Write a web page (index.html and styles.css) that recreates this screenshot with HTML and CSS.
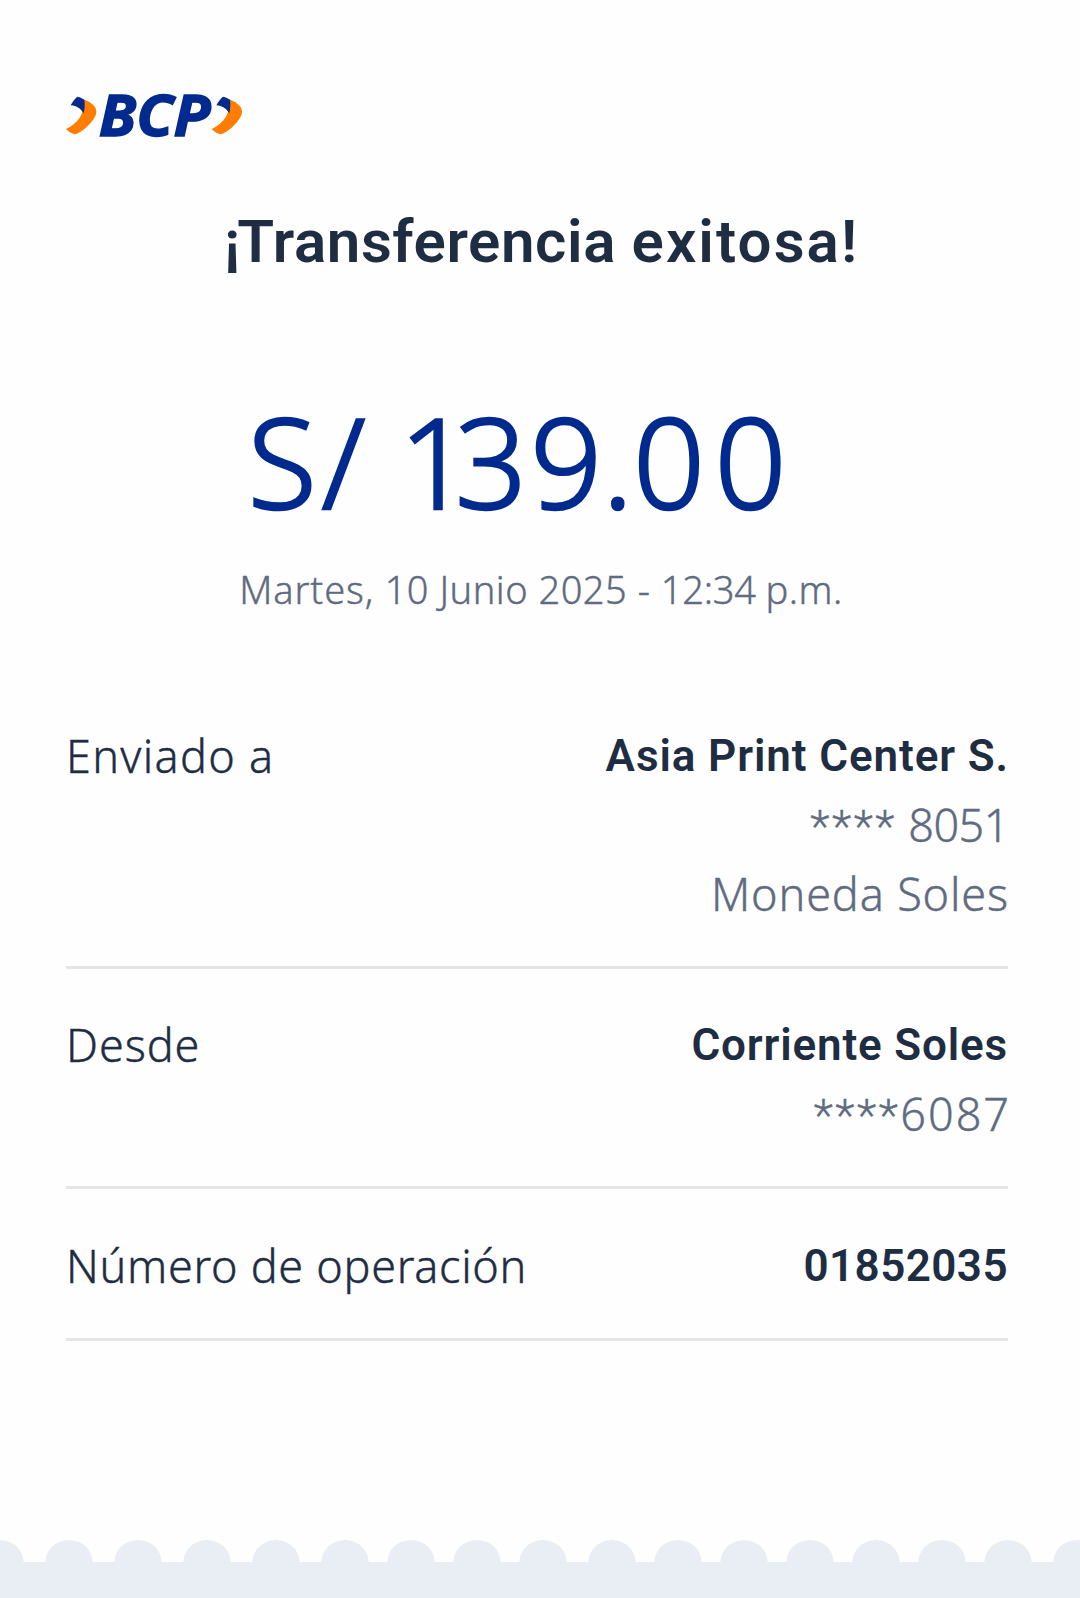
FILE: index.html
```html
<!DOCTYPE html>
<html lang="es">
<head>
<meta charset="utf-8">
<title>¡Transferencia exitosa!</title>
<link rel="stylesheet" href="styles.css">
</head>
<body>
<main class="receipt">
  <svg class="logo" viewBox="0 -30 630 270" role="img" aria-label="BCP">
    <defs>
      <g id="chevron">
        <path fill="#ff7d00" d="M98 57L106 60C126 69 138 80 139 93C140 108 126 127 108 143C96 153 85 161 74 163C66 161 55 155 48 147C68 138 88 122 97 97Z"/>
        <path fill="#002a8d" d="M62 76C68 65 74 56 82 50C90 51 99 55 103 60C105 72 104 86 101 100C93 87 80 76 62 76Z"/>
      </g>
    </defs>
    <use href="#chevron"/>
    <text class="logo-text" x="146" y="169" textLength="336" lengthAdjust="spacingAndGlyphs">BCP</text>
    <use href="#chevron" x="437"/>
  </svg>

  <h1 class="title"><span class="mark">¡</span>Transferencia <span class="wide">exitosa!</span></h1>
  <p class="amount"><span class="currency">S<span class="slash">/</span></span> <span class="figure"><span class="one">1</span><span class="three">3</span>9.<span class="zero">0</span>0</span></p>
  <p class="date"><span class="day">Martes,</span> 10 Junio 2025 - <span class="time">12:34 </span>p.m.</p>

  <dl class="details">
    <div class="row">
      <dt class="label label-sent">Enviado a</dt>
      <dd class="values">
        <span class="strong name">Asia Print Center S.</span>
        <span class="muted account"><span class="mask">****</span> 8051</span>
        <span class="muted currency-name">Moneda Soles</span>
      </dd>
    </div>
    <div class="row">
      <dt class="label label-from">Desde</dt>
      <dd class="values">
        <span class="strong">Corriente Soles</span>
        <span class="muted source"><span class="mask">****</span>6087</span>
      </dd>
    </div>
    <div class="row">
      <dt class="label">Número de operación</dt>
      <dd class="values"><span class="strong number">01852035</span></dd>
    </div>
  </dl>
</main>
<svg class="edge" viewBox="0 0 1080 58" aria-hidden="true">
  <defs><ellipse id="bump" cy="22.5" rx="23.7" ry="22.5"/></defs>
  <rect y="22" width="1080" height="36"/>
  <use href="#bump" x="0"/><use href="#bump" x="69"/><use href="#bump" x="138"/><use href="#bump" x="207"/>
  <use href="#bump" x="276"/><use href="#bump" x="345"/><use href="#bump" x="411"/><use href="#bump" x="477"/>
  <use href="#bump" x="543"/><use href="#bump" x="612"/><use href="#bump" x="678"/><use href="#bump" x="744"/>
  <use href="#bump" x="810"/><use href="#bump" x="876"/><use href="#bump" x="942"/><use href="#bump" x="1008"/>
  <use href="#bump" x="1077"/>
</svg>
</body>
</html>
```
FILE: styles.css
```css
* { box-sizing: border-box; }

body {
  margin: 0;
  height: 1598px;
  display: flex;
  flex-direction: column;
  justify-content: space-between;
  overflow: hidden;
  background: #fefefe;
  color: #1f2d43;
  font-family: "Noto Sans", "Open Sans", sans-serif;
  font-weight: 300;
}

.receipt { padding-top: 70px; }

.logo {
  display: block;
  width: 210px;
  height: 90px;
  margin-left: 50px;
}

.logo-text {
  fill: #002a8d;
  stroke: #002a8d;
  stroke-width: 4px;
  font: italic 700 173px "Open Sans", sans-serif;
}

.title {
  margin: 42px 0 0;
  font-family: Roboto, sans-serif;
  font-size: 60px;
  font-weight: 600;
  line-height: 80px;
  letter-spacing: 0.6px;
  padding-left: 3px;
  text-align: center;
}

.mark { letter-spacing: -3px; }
.wide { letter-spacing: 2.1px; }

.amount {
  margin: 103px 0 0;
  padding-right: 46px;
  color: #002a8d;
  font-size: 126px;
  line-height: 150px;
  text-align: center;
  -webkit-text-stroke: 2.4px #002a8d;
}

.currency { letter-spacing: 5px; }
.slash { letter-spacing: 1px; }
.one { letter-spacing: -16px; }
.three { letter-spacing: 3.4px; }
.zero { letter-spacing: 9.5px; }

.date {
  margin: 29px 0 0;
  padding-left: 2px;
  color: #5f6b80;
  font-size: 38px;
  line-height: 50px;
  letter-spacing: 0.5px;
  text-align: center;
  -webkit-text-stroke: 0.4px #5f6b80;
}

.day { letter-spacing: 0.9px; }
.time { letter-spacing: -0.2px; }

.details { margin: 108px 72px 0 66px; }

.row {
  display: flex;
  justify-content: space-between;
  padding-bottom: 37px;
  border-bottom: 3px solid #e5e5e5;
}

.row + .row { padding-top: 42px; }
.row + .row + .row { padding-top: 43px; }

.label {
  font-size: 45px;
  line-height: 68px;
  letter-spacing: 0.7px;
  -webkit-text-stroke: 0.4px #1f2d43;
}

.label-sent { letter-spacing: 1.3px; }
.label-from { letter-spacing: 0.9px; }

.values {
  display: flex;
  flex-direction: column;
  align-items: flex-end;
  margin: 0;
  line-height: 69px;
}

.strong {
  font-family: Roboto, sans-serif;
  font-size: 44px;
  font-weight: 600;
  letter-spacing: 0.84px;
}

.muted {
  margin: -1px 0 1px;
  color: #5f6b80;
  font-size: 45px;
  letter-spacing: 0.85px;
  -webkit-text-stroke: 0.4px #5f6b80;
}

.name { letter-spacing: 0.9px; margin-right: -1px; }
.number { letter-spacing: 0.43px; }
.account { margin-right: -1px; letter-spacing: -0.5px; }
.currency-name { margin-right: -1px; }
.source { margin-right: -3px; letter-spacing: 1.97px; }
.mask { font-family: Roboto, sans-serif; line-height: 0; letter-spacing: 2.57px; }

.edge {
  display: block;
  width: 1080px;
  height: 58px;
  fill: #e9edf4;
}
```
